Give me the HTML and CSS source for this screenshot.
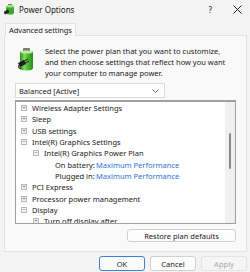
FILE: index.html
```html
<!DOCTYPE html>
<html lang="en">
<head>
  <meta charset="UTF-8" />
  <title>Power Options</title>
  <link rel="stylesheet" href="styles.css">
</head>
<body>
  <div class="window">

    <!-- Title bar -->
    <div class="titlebar">
      <svg class="app-icon" width="11" height="11" viewBox="0 0 11 11">
        <rect x="4" y="0" width="4" height="2" fill="#777" />
        <rect x="2" y="1.5" width="8" height="9" rx="2" fill="#3ea82c" />
        <ellipse cx="6" cy="2.2" rx="4" ry="1.2" fill="#a8e48a" />
        <rect x="0" y="6.5" width="5" height="3" fill="#222" transform="rotate(-30 2.5 8)" />
      </svg>
      <div class="title">Power Options</div>
      <div class="help">?</div>
      <svg class="close" width="9" height="9" viewBox="0 0 9 9">
        <path d="M0.5 0.5 L8.5 8.5 M8.5 0.5 L0.5 8.5" stroke="#222" stroke-width="1" />
      </svg>
    </div>

    <!-- Tabs -->
    <div class="tabs">
      <div class="tab">Advanced settings</div>
    </div>

    <div class="page">
      <div class="intro">
        <svg class="battery" width="19" height="23" viewBox="0 0 19 23">
          <defs>
            <linearGradient id="body" x1="0" x2="1" y1="0" y2="0">
              <stop offset="0" stop-color="#2f8f1f" />
              <stop offset="0.35" stop-color="#7fd65a" />
              <stop offset="0.6" stop-color="#4db832" />
              <stop offset="1" stop-color="#2b8a1c" />
            </linearGradient>
          </defs>
          <rect x="6" y="0" width="7" height="4" rx="1" fill="#7a7a7a" />
          <path d="M3 4 Q3 2.5 9.5 2.5 Q16 2.5 16 4 L16 20 Q16 22.5 9.5 22.5 Q3 22.5 3 20 Z" fill="url(#body)" />
          <ellipse cx="9.5" cy="4" rx="6.5" ry="1.6" fill="#b9eca0" />
          <path d="M1 15 L7 12 L9 16 L3 19 Z" fill="#1e1e1e" />
          <path d="M7 13 L11 11 M8 15 L12 13" stroke="#1e1e1e" stroke-width="1" />
          <path d="M2 17 Q1 20 4 21" stroke="#1e1e1e" stroke-width="1.2" fill="none" />
        </svg>
        <p class="intro-text">Select the power plan that you want to customize, and then choose settings that reflect how you want your computer to manage power.</p>
      </div>

      <div class="combo">
        <span>Balanced [Active]</span>
        <svg width="7" height="4" viewBox="0 0 7 4">
          <path d="M0.5 0.5 L3.5 3.5 L6.5 0.5" stroke="#555" stroke-width="0.9" fill="none" />
        </svg>
      </div>

      <!-- Settings tree -->
      <div class="tree">
        <div class="tree-rows">
          <div class="row"><span class="exp">+</span>Wireless Adapter Settings</div>
          <div class="row"><span class="exp">+</span>Sleep</div>
          <div class="row"><span class="exp">+</span>USB settings</div>
          <div class="row"><span class="exp">&minus;</span>Intel(R) Graphics Settings</div>
          <div class="row level2"><span class="exp">&minus;</span>Intel(R) Graphics Power Plan</div>
          <div class="row level3"><span class="label">On battery:</span><span class="value">Maximum Performance</span></div>
          <div class="row level3"><span class="label">Plugged in:</span><span class="value">Maximum Performance</span></div>
          <div class="row"><span class="exp">+</span>PCI Express</div>
          <div class="row"><span class="exp">+</span>Processor power management</div>
          <div class="row"><span class="exp">&minus;</span>Display</div>
          <div class="row level2"><span class="exp">+</span>Turn off display after</div>
        </div>
        <div class="scrollbar">
          <div class="thumb"></div>
        </div>
      </div>

      <div class="restore-row">
        <button class="btn restore">Restore plan defaults</button>
      </div>
    </div>

    <div class="footer">
      <button class="btn ok">OK</button>
      <button class="btn">Cancel</button>
      <button class="btn disabled">Apply</button>
    </div>
  </div>
</body>
</html>
```

FILE: styles.css
```css
html, body {
  margin: 0;
  padding: 0;
  background: #f3f3f3;
  font-family: "Noto Sans", "Liberation Sans", sans-serif;
  font-size: 7.5px;
  color: #1a1a1a;
}

.window {
  width: 250px;
  height: 272px;
  overflow: hidden;
}

.titlebar {
  display: flex;
  align-items: center;
  height: 18px;
  padding: 0 8px 0 4px;
}

.app-icon {
  margin-right: 4px;
}

.title {
  flex: 1;
  font-size: 8px;
}

.help {
  font-size: 8px;
  margin-right: 21px;
}

.tabs {
  display: flex;
  margin-top: 5px;
  padding-left: 5px;
  position: relative;
  z-index: 1;
}

.tab {
  height: 12px;
  line-height: 12px;
  padding: 0 3px;
  white-space: nowrap;
  letter-spacing: -0.1px;
  background: #f9f9f9;
  border: 1px solid #e2e2e2;
  border-bottom: none;
  margin-bottom: -1px;
}

.page {
  margin: 0 3px 0 4px;
  height: 215px;
  background: #f9f9f9;
  border: 1px solid #e2e2e2;
  padding: 0 10px;
}

.intro {
  display: flex;
  align-items: flex-start;
  padding-top: 10px;
  height: 37px;
}

.battery {
  margin: 2px 0 0 2px;
}

.intro-text {
  margin: 0 0 0 9px;
  line-height: 11px;
  width: 185px;
}

.combo {
  display: flex;
  justify-content: space-between;
  align-items: center;
  width: 140px;
  height: 13px;
  padding: 0 5px 0 3px;
  background: #fff;
  border: 1px solid #d9d9d9;
}

.tree {
  display: flex;
  margin-top: 2px;
  width: 219px;
  height: 121px;
  background: #fff;
  border: 1px solid #a0a0a0;
  border-top-width: 2px;
}

.tree-rows {
  flex: 1;
  padding-top: 0.5px;
  overflow: hidden;
}

.row {
  display: flex;
  align-items: center;
  height: 11.33px;
  padding-left: 5px;
  white-space: nowrap;
}

.row.level2 {
  padding-left: 17px;
}

.row.level3 {
  padding-left: 39px;
}

.exp {
  display: inline-flex;
  align-items: center;
  justify-content: center;
  box-sizing: border-box;
  width: 6px;
  height: 6px;
  margin-right: 5px;
  border: 1px solid #b8b8b8;
  background: #f4f4f4;
  color: #666;
  font-size: 6px;
  line-height: 1;
}

.label {
  width: 41px;
}

.value {
  color: #2f74d0;
}

.scrollbar {
  width: 10px;
  background: #f0f0f0;
  position: relative;
}

.thumb {
  position: absolute;
  left: 4px;
  top: 31px;
  width: 2px;
  height: 36px;
  background: #8a8a8a;
  border-radius: 1px;
}

.restore-row {
  display: flex;
  justify-content: flex-end;
  margin-top: 5px;
}

.btn {
  font-family: "Noto Sans", "Liberation Sans", sans-serif;
  font-size: 7.5px;
  color: #1a1a1a;
  background: #fdfdfd;
  border: 1px solid #d0d0d0;
  border-radius: 3px;
  padding: 0;
  height: 14px;
}

.restore {
  width: 109px;
  height: 13px;
}

.footer {
  display: flex;
  justify-content: flex-end;
  gap: 5px;
  padding: 4px 3px 0 0;
}

.footer .btn {
  width: 46px;
  height: 15px;
}

.btn.ok {
  border: 1.5px solid #3d80d0;
}

.btn.disabled {
  color: #a8a8a8;
  background: #f5f5f5;
  border-color: #e3e3e3;
}
```
